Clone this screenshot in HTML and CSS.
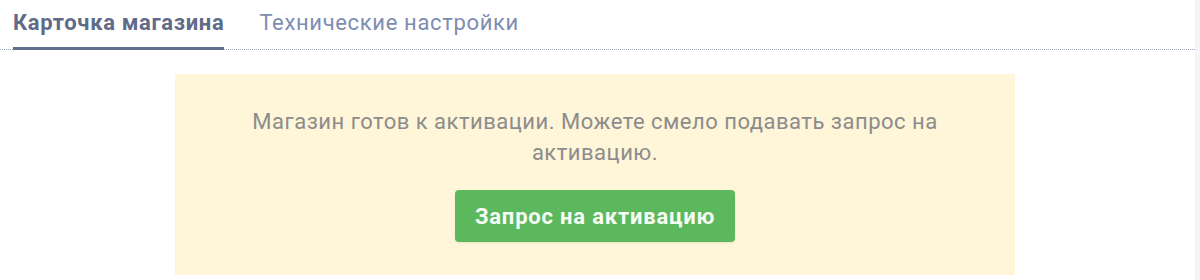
FILE: index.html
```html
<!DOCTYPE html>
<html lang="ru">
<head>
<meta charset="utf-8">
<link rel="stylesheet" href="styles.css">
</head>
<body>
<div class="page">
  <div class="main">
    <nav class="tabs">
      <span class="tab active">Карточка магазина</span>
      <span class="tab">Технические настройки</span>
    </nav>
    <section class="notice">
      <p class="notice-text">Магазин готов к активации. Можете смело подавать запрос на активацию.</p>
      <button class="btn">Запрос на активацию</button>
    </section>
  </div>
  <div class="edge"></div>
</div>
</body>
</html>
```
FILE: styles.css
```css
html, body {
  margin: 0;
  padding: 0;
  background: #ffffff;
  font-family: Roboto, "Liberation Sans", sans-serif;
}
.page {
  display: flex;
  width: 1200px;
  height: 280px;
}
.main {
  flex: 1;
  display: flex;
  flex-direction: column;
}
.edge {
  width: 5px;
  background: #f4f5f9;
}
.tabs {
  display: flex;
  gap: 35px;
  padding: 0 0 0 13px;
  height: 49px;
  border-bottom: 1px dotted #9aa3b8;
}
.tab {
  font-size: 22px;
  line-height: 26px;
  letter-spacing: 0.65px;
  padding-top: 10px;
  color: #7d8db0;
  box-sizing: border-box;
  height: 50px;
}
.tab.active {
  font-weight: 700;
  color: #5f6b88;
  border-bottom: 3px solid #5f6d8e;
}
.notice {
  align-self: flex-start;
  width: 840px;
  margin: 24px 0 0 175px;
  box-sizing: border-box;
  padding: 32px 60px 33px;
  background: #fff5d8;
  display: flex;
  flex-direction: column;
  align-items: center;
}
.notice-text {
  margin: 0;
  text-align: center;
  font-size: 22px;
  line-height: 31px;
  letter-spacing: 0.5px;
  color: #8c8c8c;
}
.btn {
  margin-top: 22px;
  width: 280px;
  height: 52px;
  border: none;
  border-radius: 4px;
  background: #5cb85c;
  color: #f6fbf4;
  font-family: Roboto, "Liberation Sans", sans-serif;
  font-weight: 700;
  font-size: 22px;
  letter-spacing: 0.8px;
  box-shadow: 0 1px 2px rgba(0,0,0,0.08);
}
```
